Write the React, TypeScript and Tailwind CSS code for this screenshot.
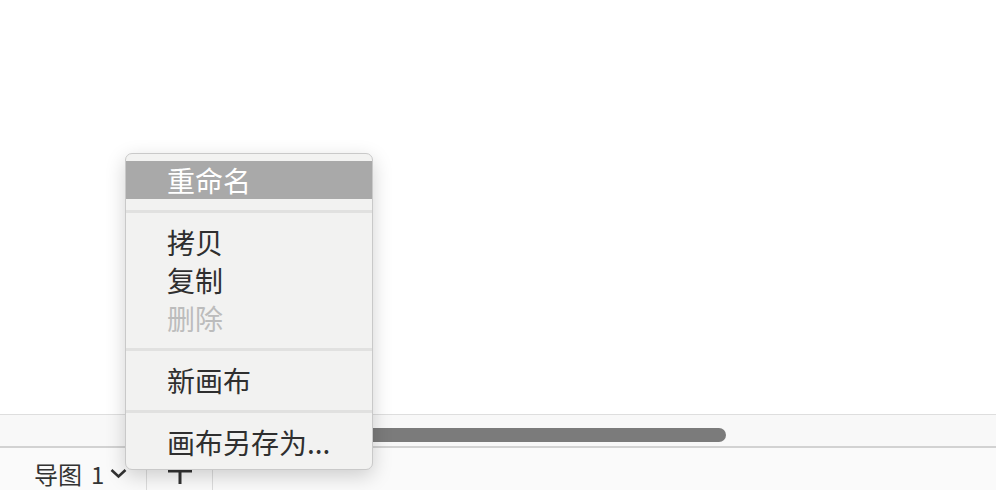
export default function App() {
  const item = "h-[38px] flex items-center pl-[41px] text-[28px] leading-none";
  const sep = (
    <div className="h-[24px] flex items-center">
      <div className="h-[3px] w-full bg-[#e1e1e0]" />
    </div>
  );
  return (
    <div className="relative w-[996px] h-[490px] overflow-hidden bg-white flex flex-col font-['Noto_Sans_CJK_SC','Noto_Sans',sans-serif]">
      <div className="h-[414px] shrink-0" />
      <div className="h-[34px] shrink-0 border-t border-[#dedede] border-b-2 border-b-[#d2d2d2] bg-[#f8f8f8] pt-[13px] pl-[200px]">
        <div className="w-[526px] h-[14px] rounded-full bg-[#7b7b7b]" />
      </div>
      <div className="flex-1 bg-[#fafafa] flex">
        <div className="w-[147px] border-r border-[#dcdcdc] pl-[34px] pt-[14px] flex items-start text-[24px] leading-[24px] text-[#333]">
          <span>导图</span>
          <span className="ml-[9px]">1</span>
          <svg className="ml-[6px] mt-[6px]" width="17" height="11" viewBox="0 0 17 11">
            <polyline points="1.5,2 8.5,8.5 15.5,2" fill="none" stroke="#333" strokeWidth="2.6" />
          </svg>
        </div>
        <div className="w-[66px] border-r border-[#dcdcdc] flex justify-center pt-[11px]">
          <svg width="26" height="26" viewBox="0 0 26 26">
            <path d="M13 1v24M1 12h24" stroke="#333" strokeWidth="3" fill="none" />
          </svg>
        </div>
      </div>

      <div className="absolute left-[125px] top-[153px] w-[248px] h-[317px] rounded-[7px] bg-[#f2f2f1] border border-[#c9c9c9] shadow-[0_6px_20px_rgba(0,0,0,0.18)] pt-[7px] overflow-hidden text-[#2f2f2f]">
        <div className={`${item} bg-[#a9a9a9] text-white`}>重命名</div>
        {sep}
        <div className={item}>拷贝</div>
        <div className={item}>复制</div>
        <div className={`${item} text-[#bcbcbc]`}>删除</div>
        {sep}
        <div className={item}>新画布</div>
        {sep}
        <div className={item}>画布另存为...</div>
      </div>
    </div>
  );
}
